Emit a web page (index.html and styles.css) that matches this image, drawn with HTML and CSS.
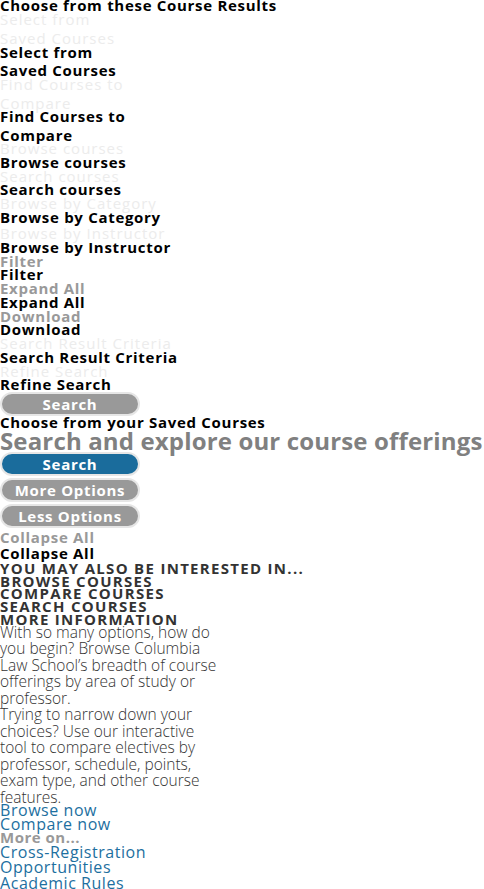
FILE: index.html
```html
<!DOCTYPE html>
<html lang="en">
<head>
<meta charset="utf-8">
<title>Course Search</title>
<link rel="stylesheet" href="styles.css">
</head>
<body>
<main class="page">
  <h2 class="lbl first">Choose from these Course Results</h2>
  <div class="lbl ghost two">Select from<br>Saved Courses</div>
  <div class="lbl two">Select from<br>Saved Courses</div>
  <div class="lbl ghost two">Find Courses to<br>Compare</div>
  <div class="lbl two">Find Courses to<br>Compare</div>
  <div class="lbl ghost">Browse courses</div>
  <div class="lbl">Browse courses</div>
  <div class="lbl ghost">Search courses</div>
  <div class="lbl">Search courses</div>
  <div class="lbl ghost">Browse by Category</div>
  <div class="lbl">Browse by Category</div>
  <div class="lbl ghost spaced">Browse by Instructor</div>
  <div class="lbl">Browse by Instructor</div>
  <div class="lbl muted">Filter</div>
  <div class="lbl">Filter</div>
  <div class="lbl muted">Expand All</div>
  <div class="lbl">Expand All</div>
  <div class="lbl muted">Download</div>
  <div class="lbl">Download</div>
  <div class="lbl ghost">Search Result Criteria</div>
  <div class="lbl">Search Result Criteria</div>
  <div class="lbl ghost">Refine Search</div>
  <div class="lbl">Refine Search</div>
  <button class="btn" type="button">Search</button>
  <div class="lbl">Choose from your Saved Courses</div>
  <h1 class="headline">Search and explore our course offerings</h1>
  <div class="actions">
    <button class="btn primary" type="button">Search</button>
    <button class="btn" type="button">More Options</button>
    <button class="btn" type="button">Less Options</button>
  </div>
  <div class="lbl muted collapse-muted">Collapse All</div>
  <div class="lbl collapse">Collapse All</div>
  <div class="caps">
    <div>YOU MAY ALSO BE INTERESTED IN...</div>
    <div>BROWSE COURSES</div>
    <div>COMPARE COURSES</div>
    <div>SEARCH COURSES</div>
    <div>MORE INFORMATION</div>
  </div>
  <div class="copy">
    <p>With so many options, how do you begin? Browse Columbia Law School’s breadth of course offerings by area of study or professor.</p>
    <p>Trying to narrow down your choices? Use our interactive tool to compare electives by professor, schedule, points, exam type, and other course features.</p>
  </div>
  <nav class="links now-links">
    <a href="#">Browse now</a>
    <a href="#">Compare now</a>
    <span class="more">More on...</span>
  </nav>
  <nav class="links more-list">
    <a href="#">Cross-Registration Opportunities</a>
    <a href="#">Academic Rules</a>
  </nav>
</main>
</body>
</html>
```
FILE: styles.css
```css
* {
  margin: 0;
  padding: 0;
  box-sizing: border-box;
}

body {
  background: #fff;
  font-family: "Open Sans", "Noto Sans", sans-serif;
  color: #000;
}

.page {
  display: flex;
  flex-direction: column;
  align-items: flex-start;
}

.lbl {
  font-size: 15px;
  font-weight: 700;
  line-height: 13.75px;
  letter-spacing: 0.7px;
  color: #000;
  white-space: nowrap;
}

.first {
  margin-top: -1px;
}

.ghost {
  font-weight: 400;
  color: #ececec;
  letter-spacing: 1px;
}

.spaced {
  margin-top: 2.5px;
}

.muted {
  color: #999;
}

.two {
  line-height: 18.5px;
  margin: -2.35px 0;
}

.btn {
  display: block;
  width: 140px;
  height: 24px;
  border: 2px solid #e6e6e6;
  border-radius: 12px;
  background: #999;
  color: #fff;
  font-family: "Open Sans", sans-serif;
  font-size: 15px;
  font-weight: 700;
  line-height: 20px;
  letter-spacing: 0.7px;
  text-align: center;
  cursor: pointer;
}

.btn.primary {
  background: #1a6c9c;
}

.actions {
  display: flex;
  flex-direction: column;
  gap: 2px;
}

.headline {
  font-size: 24px;
  font-weight: 700;
  line-height: 22px;
  letter-spacing: 0.15px;
  color: #808080;
  white-space: nowrap;
}

.collapse-muted {
  margin-top: 3.5px;
}

.collapse {
  margin-top: 1.5px;
}

.caps {
  margin-top: 1.5px;
  font-size: 15px;
  font-weight: 700;
  line-height: 12.8px;
  letter-spacing: 1.3px;
  color: #333;
  white-space: nowrap;
}

.copy {
  width: 222px;
  margin-top: -2px;
  font-size: 15.5px;
  font-weight: 300;
  line-height: 16.5px;
  color: #333;
}

.links {
  display: flex;
  flex-direction: column;
  align-items: flex-start;
  font-size: 16px;
  line-height: 13.5px;
  letter-spacing: 0.55px;
}

.links a {
  color: #1d6fa0;
  text-decoration: none;
}

.now-links {
  margin-top: -1px;
}

.more {
  font-size: 15px;
  font-weight: 700;
  color: #999;
  letter-spacing: 0.5px;
}

.more-list {
  width: 165px;
  line-height: 15.5px;
}
```
